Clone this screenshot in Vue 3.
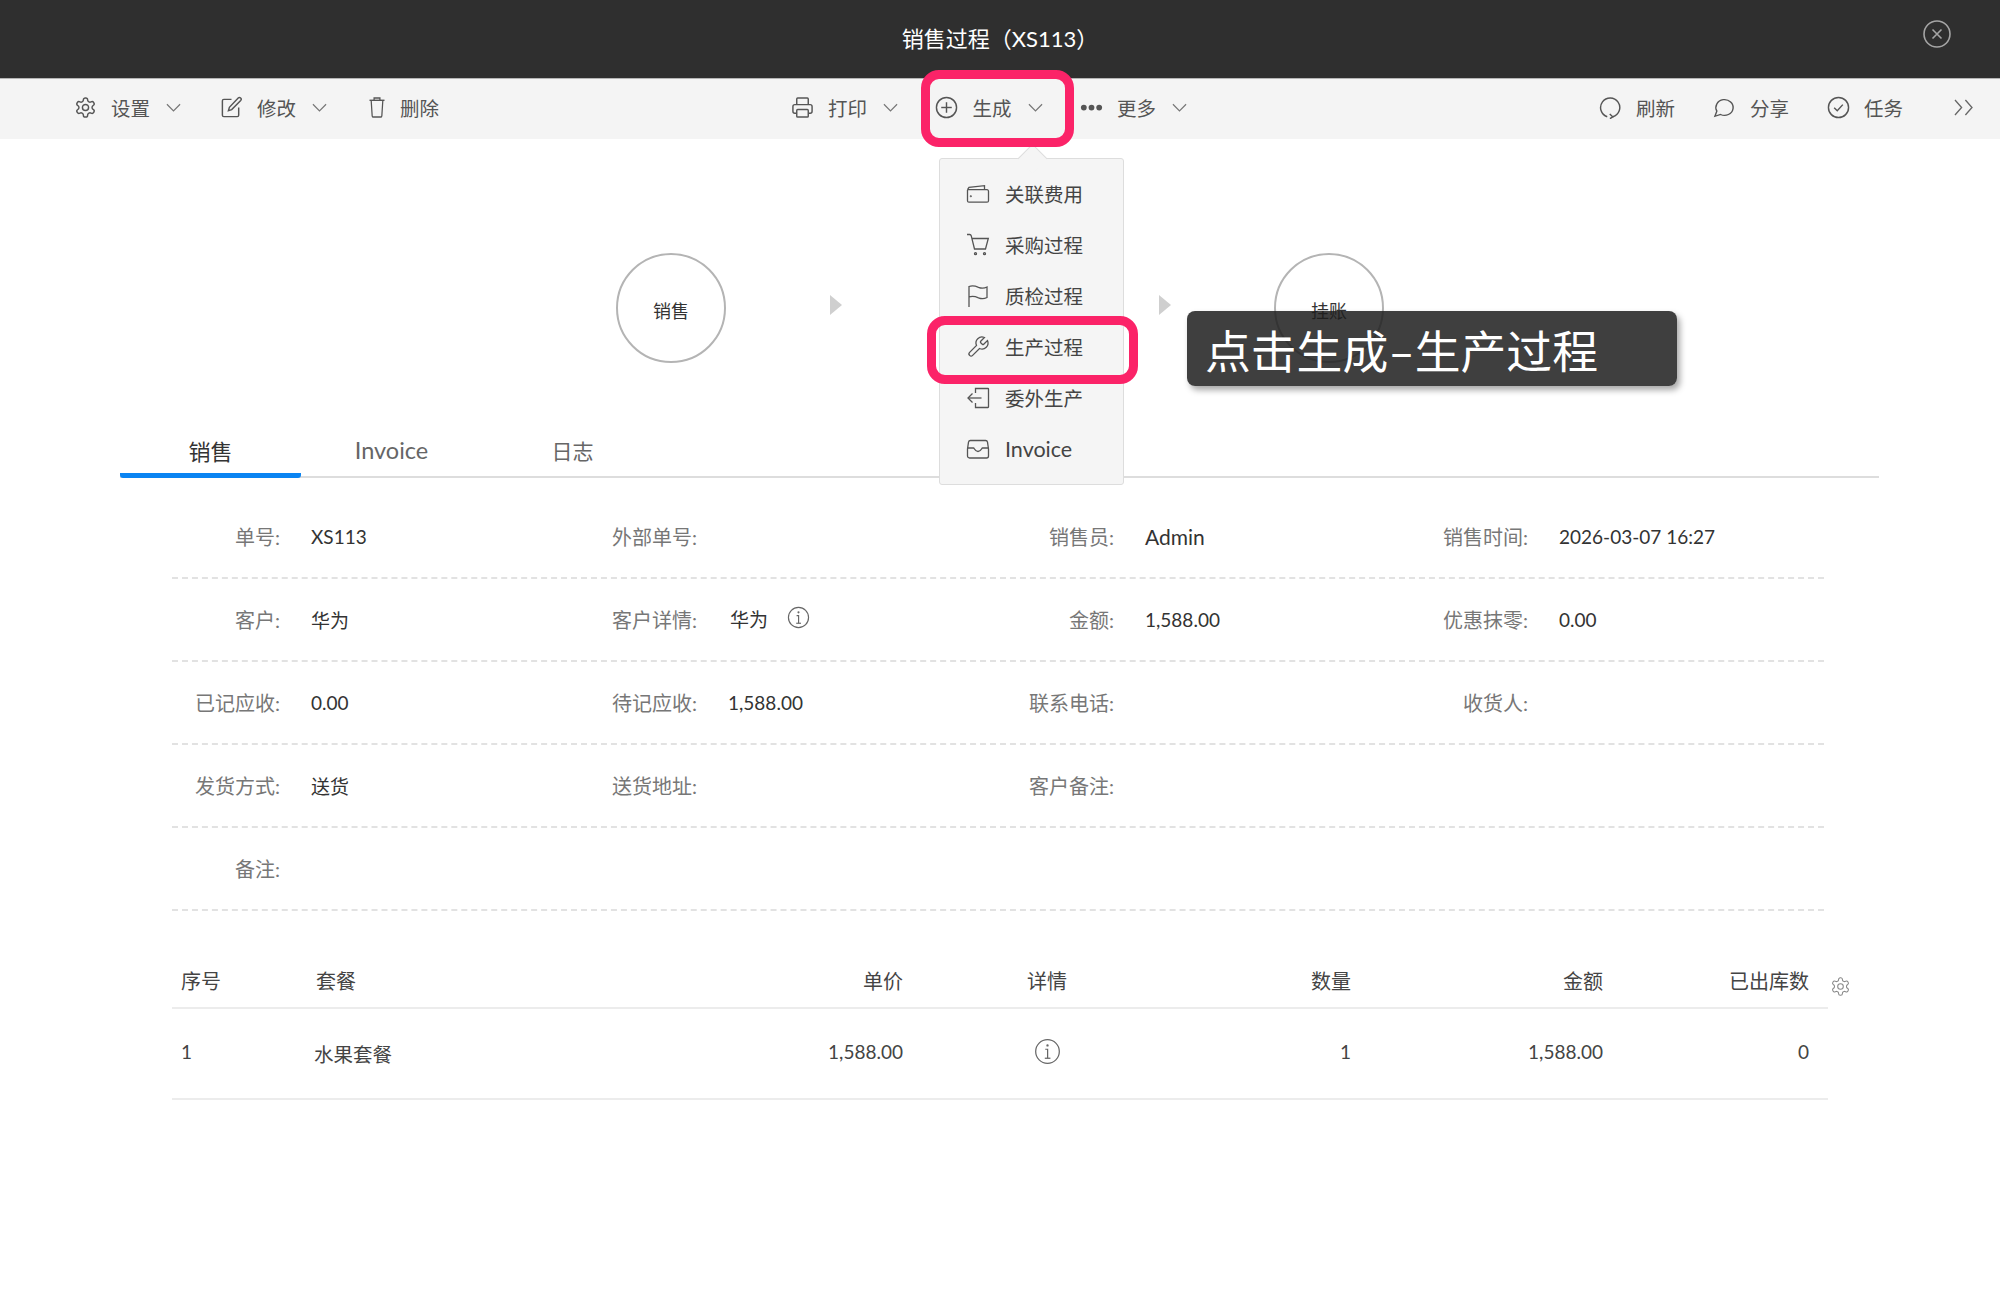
<script setup>
const circle = (cx, cy, r) => `M${cx - r} ${cy}a${r} ${r} 0 1 0 ${r * 2} 0a${r} ${r} 0 1 0 ${-r * 2} 0z`;

const gear = 'M12.22 2h-.44a2 2 0 0 0-2 2v.18a2 2 0 0 1-1 1.73l-.43.25a2 2 0 0 1-2 0l-.15-.08a2 2 0 0 0-2.73.73l-.22.38a2 2 0 0 0 .73 2.73l.15.1a2 2 0 0 1 1 1.72v.51a2 2 0 0 1-1 1.74l-.15.09a2 2 0 0 0-.73 2.73l.22.38a2 2 0 0 0 2.73.73l.15-.08a2 2 0 0 1 2 0l.43.25a2 2 0 0 1 1 1.73V20a2 2 0 0 0 2 2h.44a2 2 0 0 0 2-2v-.18a2 2 0 0 1 1-1.73l.43-.25a2 2 0 0 1 2 0l.15.08a2 2 0 0 0 2.73-.73l.22-.39a2 2 0 0 0-.73-2.73l-.15-.08a2 2 0 0 1-1-1.74v-.5a2 2 0 0 1 1-1.74l.15-.09a2 2 0 0 0 .73-2.73l-.22-.38a2 2 0 0 0-2.73-.73l-.15.08a2 2 0 0 1-2 0l-.43-.25a2 2 0 0 1-1-1.73V4a2 2 0 0 0-2-2z';

const icons = {
  gear: [gear, circle(12, 12, 3.2)],
  edit: ['M12 3.500H4a1.500 1.500 0 0 0-1.500 1.500v15A1.500 1.500 0 0 0 4 21.500h14a1.500 1.500 0 0 0 1.500-1.500v-8', 'M19 2.200a1.600 1.600 0 0 1 2.600 2.400l-9.400 9.600-3.400 1 1-3.400z'],
  trash: ['M8.500 4.500V2h7v2.500', 'M3 4.500h18', 'M5 4.500l1.200 16.200A1.500 1.500 0 0 0 7.700 22h8.600a1.500 1.500 0 0 0 1.500-1.300L19 4.500'],
  printer: ['M6 18H4a2 2 0 0 1-2-2v-5a2 2 0 0 1 2-2h16a2 2 0 0 1 2 2v5a2 2 0 0 1-2 2h-2', 'M6 9V3a1 1 0 0 1 1-1h10a1 1 0 0 1 1 1v6', 'M7 14h10a1 1 0 0 1 1 1v6a1 1 0 0 1-1 1H7a1 1 0 0 1-1-1v-6a1 1 0 0 1 1-1z'],
  plus: [circle(12, 12, 10.5), 'M12 6.500v11', 'M6.500 12h11'],
  dots: ['M4 12h.01', 'M12 12h.01', 'M20 12h.01'],
  refresh: ['M8.600 21.600A10 10 0 1 1 14.400 21.700', 'M11.200 18.800l3.200 2.900-3 2'],
  share: ['M7.900 20A9 9 0 1 0 4 16.100L2 22Z'],
  check: [circle(12, 12, 10.5), 'M7.500 12.200l3.200 3.200 5.800-6.400'],
  wallet: ['M1.500 8v10.700A1.500 1.500 0 0 0 3 20.200h18a1.500 1.500 0 0 0 1.500-1.500V9.200A1.500 1.500 0 0 0 21 7.700H1.500', 'M1.500 7.700L3 5.400 18.500 3.700v4', circle(4.8, 14.2, 0.4)],
  cart: ['M1 1.500h2.800c.8 0 1.200.5 1.400 1.200l3.300 13.300h11l2.800-10.500H6.200', circle(9.5, 20.7, 1), circle(18.5, 20.7, 1)],
  flag: ['M3 23V2.500c4-1.500 6.500-.5 9.500.8 3 1.200 5.500 1.200 8.500-.3v10.500c-3 1.500-5.500 1.500-8.500.3-3-1.300-5.500-2.300-9.500-.8'],
  wrench: ['M14.700 6.300a1 1 0 0 0 0 1.400l1.600 1.600a1 1 0 0 0 1.400 0l3.770-3.770a6 6 0 0 1-7.940 7.940l-6.910 6.910a2.120 2.120 0 0 1-3-3l6.910-6.910a6 6 0 0 1 7.940-7.940l-3.760 3.760z'],
  exit: ['M9.500 7V2.500h12.500a.5.5 0 0 1 .5.5v18a.5.5 0 0 1-.5.5H9.500V17', 'M15.500 12H2', 'M6.500 7.500L2 12l4.500 4.500'],
  inbox: ['M4.500 3.500h15a2 2 0 0 1 2 1.600l1 6.900V19a2 2 0 0 1-2 2h-17a2 2 0 0 1-2-2v-7l1-6.900a2 2 0 0 1 2-1.600z', 'M1.500 11h6c1 0 1.200 3.500 4.500 3.500s3.500-3.500 4.500-3.500h6']
};
const infoPaths = [circle(12, 12, 10.5), circle(12, 6.6, 0.5), 'M10 10h2.100v8', 'M9.600 18h5'];

const leftTools = [
  { icon: 'gear', label: '设置', arrow: true },
  { icon: 'edit', label: '修改', arrow: true },
  { icon: 'trash', label: '删除', arrow: false }
];
const centerTools = [
  { icon: 'printer', label: '打印', arrow: true },
  { icon: 'plus', label: '生成', arrow: true },
  { icon: 'dots', label: '更多', arrow: true }
];
const rightTools = [
  { icon: 'refresh', label: '刷新' },
  { icon: 'share', label: '分享' },
  { icon: 'check', label: '任务' }
];
const menuItems = [
  { icon: 'wallet', label: '关联费用' },
  { icon: 'cart', label: '采购过程' },
  { icon: 'flag', label: '质检过程' },
  { icon: 'wrench', label: '生产过程' },
  { icon: 'exit', label: '委外生产' },
  { icon: 'inbox', label: 'Invoice', latin: true }
];
const tabs = [
  { label: '销售' },
  { label: 'Invoice', latin: true },
  { label: '日志' }
];
const infoRows = [
  [{ label: '单号', value: 'XS113' }, { label: '外部单号' }, { label: '销售员', value: 'Admin', latin: true }, { label: '销售时间', value: '2026-03-07 16:27' }],
  [{ label: '客户', value: '华为' }, { label: '客户详情', value: '华为', info: true }, { label: '金额', value: '1,588.00' }, { label: '优惠抹零', value: '0.00' }],
  [{ label: '已记应收', value: '0.00' }, { label: '待记应收', value: '1,588.00' }, { label: '联系电话' }, { label: '收货人' }],
  [{ label: '发货方式', value: '送货' }, { label: '送货地址' }, { label: '客户备注' }],
  [{ label: '备注' }]
];
</script>

<template>
  <div class="page">
    <header class="title-bar">
      <span class="title">销售过程（XS113）</span>
      <svg class="close" viewBox="0 0 28 28">
        <circle cx="14" cy="14" r="13" />
        <path d="M9.500 9.500l9 9M18.500 9.500l-9 9" />
      </svg>
    </header>

    <div class="toolbar">
      <div class="tool-group">
        <div v-for="tool in leftTools" :key="tool.label" class="tool">
          <svg class="tool-icon" :class="'ic-' + tool.icon" viewBox="0 0 24 24" preserveAspectRatio="none"><path v-for="d in icons[tool.icon]" :key="d" :d="d" /></svg>
          <span>{{ tool.label }}</span>
          <svg v-if="tool.arrow" class="chevron" viewBox="0 0 16 10"><path d="M1 1l7 7 7-7" /></svg>
        </div>
      </div>
      <div class="tool-group center-group">
        <div v-for="tool in centerTools" :key="tool.label" class="tool">
          <svg class="tool-icon" :class="'ic-' + tool.icon" viewBox="0 0 24 24" preserveAspectRatio="none"><path v-for="d in icons[tool.icon]" :key="d" :d="d" /></svg>
          <span>{{ tool.label }}</span>
          <svg v-if="tool.arrow" class="chevron" viewBox="0 0 16 10"><path d="M1 1l7 7 7-7" /></svg>
        </div>
      </div>
      <div class="tool-group right-group">
        <div v-for="tool in rightTools" :key="tool.label" class="tool">
          <svg class="tool-icon" :class="'ic-' + tool.icon" viewBox="0 0 24 24" preserveAspectRatio="none"><path v-for="d in icons[tool.icon]" :key="d" :d="d" /></svg>
          <span>{{ tool.label }}</span>
        </div>
        <svg class="expand" viewBox="0 0 20 18"><path d="M1 1l7 8-7 8M12 1l7 8-7 8" /></svg>
      </div>
    </div>

    <div class="flow">
      <div class="step">销售</div>
      <span class="flow-arrow"></span>
      <div class="step"></div>
      <span class="flow-arrow"></span>
      <div class="step">挂账</div>
    </div>

    <div class="tabs">
      <div v-for="(tab, i) in tabs" :key="tab.label" class="tab" :class="{ active: i === 0, latin: tab.latin }">{{ tab.label }}</div>
    </div>

    <section class="info">
      <div v-for="(row, r) in infoRows" :key="r" class="info-row">
        <div v-for="cell in row" :key="cell.label" class="info-cell">
          <span class="info-label">{{ cell.label }}:</span>
          <span class="info-value" :class="{ latin: cell.latin, raised: cell.info }">{{ cell.value }}</span>
          <svg v-if="cell.info" class="info-icon" viewBox="0 0 24 24"><path v-for="d in infoPaths" :key="d" :d="d" /></svg>
        </div>
      </div>
    </section>

    <section class="table">
      <div class="table-row table-head">
        <div class="first">序号</div>
        <div>套餐</div>
        <div class="num">单价</div>
        <div class="detail">详情</div>
        <div class="num">数量</div>
        <div class="num">金额</div>
        <div class="num">已出库数</div>
        <div>
          <svg class="table-gear" viewBox="0 0 24 24"><path :d="gear" /><circle cx="12" cy="12" r="3.200" /></svg>
        </div>
      </div>
      <div class="table-row table-body">
        <div class="first">1</div>
        <div class="name">水果套餐</div>
        <div class="num">1,588.00</div>
        <div class="detail">
          <svg class="detail-icon" viewBox="0 0 24 24"><path v-for="d in infoPaths" :key="d" :d="d" /></svg>
        </div>
        <div class="num">1</div>
        <div class="num">1,588.00</div>
        <div class="num">0</div>
        <div></div>
      </div>
    </section>

    <div class="menu">
      <div v-for="item in menuItems" :key="item.label" class="menu-item">
        <svg class="menu-icon" viewBox="0 0 24 24"><path v-for="d in icons[item.icon]" :key="d" :d="d" /></svg>
        <span :class="{ latin: item.latin }">{{ item.label }}</span>
      </div>
    </div>

    <div class="mark mark-generate"></div>
    <div class="mark mark-production"></div>
    <div class="callout">点击生成–生产过程</div>
  </div>
</template>

<style scoped>
.page {
  position: relative;
  width: 2000px;
  height: 1313px;
  overflow: hidden;
  background: #fff;
  color: #555;
  font-family: Lato, "Noto Sans CJK SC", sans-serif;
  font-size: 19px;
}
svg { fill: none; stroke: currentColor; stroke-width: 1.5; flex: none; display: block; }

.title-bar {
  position: relative;
  height: 78px;
  box-sizing: border-box;
  padding-bottom: 5px;
  background: #2f2f2f;
  display: flex;
  align-items: center;
  justify-content: center;
}
.title { color: #fff; font-size: 22px; }
.close {
  position: absolute;
  right: 49px;
  top: 20px;
  width: 28px;
  height: 28px;
  color: #a5a5a5;
  stroke-width: 1.6;
}

.toolbar {
  height: 61px;
  box-sizing: border-box;
  border-top: 1px solid #b5b5b5;
  background: #f4f4f4;
  display: flex;
  align-items: center;
  padding: 0 27px 3px 75px;
  font-size: 19.500px;
}
.tool-group { display: flex; align-items: center; gap: 40px; }
.center-group { margin-left: 353px; gap: 38.500px; }
.right-group { margin-left: auto; }
.tool { display: flex; align-items: center; gap: 16px; }
.right-group .tool { gap: 15px; }
.tool-icon { width: 23px; height: 23px; margin: 0 -1.500px; }
.ic-trash { width: 20px; margin: 0 -2.500px 0 -0.500px; }
.ic-share { height: 21px; }
.ic-dots { stroke-width: 6; stroke-linecap: round; }
.chevron { width: 15px; height: 10px; color: #777; stroke-width: 1.3; }
.expand { width: 19px; height: 17px; margin-left: 11px; color: #666; stroke-width: 1.4; }

.flow {
  margin-top: 114px;
  display: flex;
  align-items: center;
  justify-content: center;
  gap: 103.500px;
}
.step {
  width: 110px;
  height: 110px;
  box-sizing: border-box;
  border: 2px solid #b4b4b4;
  border-radius: 50%;
  display: flex;
  align-items: center;
  justify-content: center;
  padding-top: 4px;
  font-size: 18px;
  color: #333;
}
.flow-arrow {
  width: 0;
  height: 0;
  margin-top: -6px;
  border-left: 12px solid #cfcfcf;
  border-top: 10px solid transparent;
  border-bottom: 10px solid transparent;
}

.tabs {
  margin: 63px 0 0 120px;
  width: 1759px;
  height: 52px;
  box-sizing: border-box;
  border-bottom: 2px solid #ddd;
  display: flex;
}
.tab {
  width: 181px;
  height: 52px;
  box-sizing: border-box;
  display: flex;
  align-items: center;
  justify-content: center;
  padding-bottom: 5px;
  font-size: 21px;
  color: #666;
}
.tab.latin { font-size: 23.500px; }
.tab.active {
  font-size: 22px;
  color: #333;
  border-bottom: 5px solid #0a84f2;
  border-radius: 3px;
  padding-bottom: 0;
}

.info { margin: 18px 0 0 172px; width: 1652px; }
.info-row {
  height: 83px;
  box-sizing: border-box;
  border-bottom: 2px dashed #e2e2e2;
  display: grid;
  grid-template-columns: 417px 417px 414px 1fr;
  align-items: center;
}
.info-cell { display: flex; align-items: center; }
.info-label { width: 108px; flex: none; text-align: right; color: #777; font-size: 20px; }
.info-value { margin-left: 31px; color: #333; }
.info-value.latin { font-size: 21px; }
.info-value.raised { margin-left: 33px; margin-top: -2px; }
.info-icon { width: 23px; height: 23px; margin: -4px 0 0 19px; color: #666; stroke-width: 1.2; }

.table { margin: 45px 0 0 172px; width: 1656px; }
.table-row {
  display: grid;
  grid-template-columns: 144px 384px 203px 288px 160px 252px 206px 19px;
  align-items: center;
  border-bottom: 2px solid #ececec;
  box-sizing: border-box;
  color: #444;
}
.table-head { height: 53px; padding-bottom: 3px; font-size: 20px; }
.table-body { height: 91px; padding-bottom: 5px; }
.first { padding-left: 9px; }
.num { text-align: right; }
.detail { display: flex; justify-content: center; }
.name { margin-left: -2px; padding-top: 4px; font-size: 19.500px; }
.table-gear { width: 21px; height: 21px; margin: 13px 0 0 21px; color: #888; stroke-width: 1.2; }
.detail-icon { width: 27px; height: 27px; color: #666; stroke-width: 1.1; }

.menu {
  position: absolute;
  left: 939px;
  top: 158px;
  width: 185px;
  height: 327px;
  box-sizing: border-box;
  padding: 9px 0 0 26px;
  background: #f5f5f5;
  border: 1px solid #ddd;
  border-radius: 3px;
  color: #444;
  font-size: 19.500px;
}
.menu::before {
  content: "";
  position: absolute;
  left: 82px;
  top: -11px;
  width: 20px;
  height: 20px;
  background: #f5f5f5;
  border-top: 1px solid #ddd;
  border-left: 1px solid #ddd;
  transform: rotate(45deg);
}
.menu-item { position: relative; height: 51px; display: flex; align-items: center; gap: 15px; }
.menu-icon { width: 24px; height: 24px; color: #555; stroke-width: 1.3; }
.menu-item .latin { font-size: 21.500px; }

.mark {
  position: absolute;
  box-sizing: border-box;
  border: 9px solid #fb2368;
  border-radius: 18px;
}
.mark-generate { left: 921px; top: 70px; width: 153px; height: 77px; }
.mark-production { left: 927px; top: 316px; width: 211px; height: 68px; }

.callout {
  position: absolute;
  left: 1187px;
  top: 311px;
  width: 490px;
  height: 75px;
  box-sizing: border-box;
  padding: 0 0 0 18px;
  display: flex;
  align-items: center;
  border-radius: 8px;
  background: rgba(29, 29, 29, 0.85);
  box-shadow: 3px 4px 6px rgba(0, 0, 0, 0.35);
  color: #fff;
  font-size: 45.800px;
  white-space: nowrap;
}
</style>

<style>
html, body { margin: 0; background: #fff; }
</style>
